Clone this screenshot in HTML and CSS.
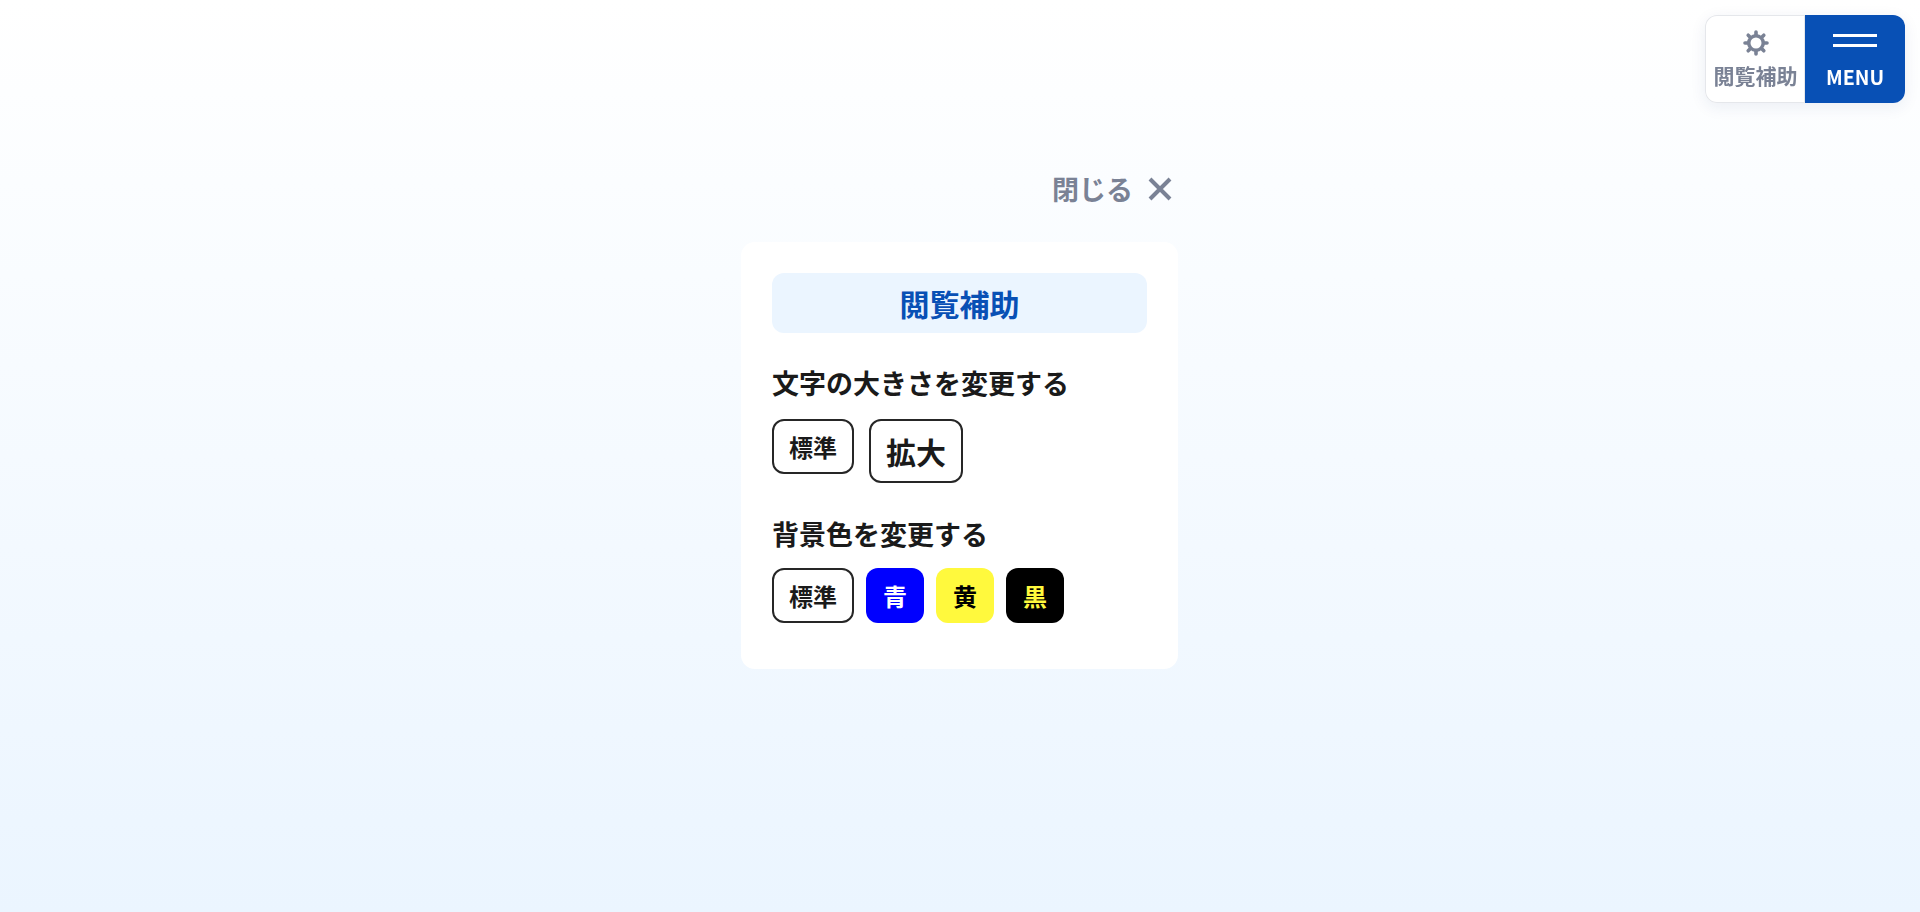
FILE: index.html
```html
<!DOCTYPE html>
<html lang="ja">
<head>
<meta charset="utf-8">
<title>閲覧補助</title>
<link rel="stylesheet" href="styles.css">
</head>
<body>
<div class="widget">
  <button class="widget-a11y">
    <svg class="gear" viewBox="0 0 26 26" width="26" height="26">
      <path class="gear-teeth" d="M13 2v22M2 13h22M5.200 5.200l15.600 15.600M20.800 5.200L5.200 20.800"/>
      <circle class="gear-body" cx="13" cy="13" r="9"/>
      <circle class="gear-hole" cx="13" cy="13" r="5.500"/>
    </svg>
    <span>閲覧補助</span>
  </button>
  <button class="widget-menu">
    <span class="bars"><i></i><i></i></span>
    <span>MENU</span>
  </button>
</div>
<main class="modal">
  <button class="close">
    <span>閉じる</span>
    <svg viewBox="0 0 26 26" width="26" height="26"><path d="M3 3l20 20M23 3L3 23" stroke-width="4" fill="none"/></svg>
  </button>
  <section class="panel">
    <h1 class="title">閲覧補助</h1>
    <h2 class="label">文字の大きさを変更する</h2>
    <div class="row row-size">
      <button class="btn">標準</button>
      <button class="btn btn-large">拡大</button>
    </div>
    <h2 class="label label-bg">背景色を変更する</h2>
    <div class="row row-color">
      <button class="btn">標準</button>
      <button class="btn swatch blue">青</button>
      <button class="btn swatch yellow">黄</button>
      <button class="btn swatch black">黒</button>
    </div>
  </section>
</main>
</body>
</html>
```
FILE: styles.css
```css
* { box-sizing: border-box; }
html, body { height: 100%; }
body {
  margin: 0;
  height: 912px;
  overflow: hidden;
  background: linear-gradient(#ffffff, #ebf5ff);
  font-family: "Noto Sans CJK JP", "Noto Sans", sans-serif;
  font-weight: 700;
  color: #1a1a1a;
}
button { font: inherit; margin: 0; cursor: pointer; }

.widget {
  position: fixed;
  top: 15px;
  right: 15px;
  display: flex;
  width: 200px;
  height: 88px;
  border-radius: 12px;
  box-shadow: 0 4px 16px rgba(20, 50, 110, .08);
}
.widget button {
  border: 0;
  padding: 0;
  display: flex;
  flex-direction: column;
  align-items: center;
  width: 100px;
  height: 88px;
}
.widget-a11y {
  background: #fff;
  color: #7a8295;
  border-radius: 12px 0 0 12px;
  font-size: 21px;
  line-height: 30px;
  box-shadow: inset 0 0 0 1px #e5e7eb;
  padding: 15px 0 0 1px !important;
}
.gear { display: block; margin-bottom: 4px; }
.gear-teeth { stroke: #7a8295; stroke-width: 3.600; stroke-linecap: round; fill: none; }
.gear-body { fill: #7a8295; }
.gear-hole { fill: #fff; }
.widget-menu {
  background: #0850b5;
  color: #fff;
  border-radius: 0 12px 12px 0;
  font-size: 19.600px;
  line-height: 30px;
  padding-top: 19px !important;
}
.bars { display: flex; flex-direction: column; gap: 7px; margin-bottom: 15px; }
.bars i { display: block; width: 44px; height: 3px; background: #fff; }

.modal {
  width: 438px;
  margin: 0 auto;
  padding-top: 167px;
}
.close {
  display: flex;
  align-items: center;
  gap: 14px;
  margin: 0 6px 0 auto;
  padding: 0;
  border: 0;
  background: none;
  color: #7a8295;
  font-size: 27px;
  line-height: 44px;
  height: 44px;
}
.close svg { stroke: #7a8295; display: block; }
.panel {
  width: 437px;
  margin-top: 31px;
  height: 427px;
  padding: 31px;
  background: #fff;
  border-radius: 14px;
}
.title {
  margin: 0;
  height: 60px;
  background: #ebf5ff;
  border-radius: 12px;
  color: #0850b5;
  font-size: 30px;
  line-height: 60px;
  text-align: center;
}
.label {
  margin: 30px 0 0;
  font-size: 27px;
  line-height: 40px;
}
.label-bg { margin-top: 31px; }
.row { display: flex; align-items: flex-start; gap: 12px; }
.row-size { gap: 15px; margin-top: 16px; }
.row-color { margin-top: 14px; }
.btn {
  width: 82px;
  height: 55px;
  padding: 0;
  background: #fff;
  border: 2px solid #262626;
  border-radius: 12px;
  color: #1a1a1a;
  font-size: 24px;
  line-height: 1;
}
.btn-large { width: 94px; height: 64px; font-size: 30px; }
.swatch { width: 58px; border: 0; }
.blue { background: #0000ff; color: #fff; }
.yellow { background: #fff93d; color: #000; }
.black { background: #000; color: #fff93d; }
```
